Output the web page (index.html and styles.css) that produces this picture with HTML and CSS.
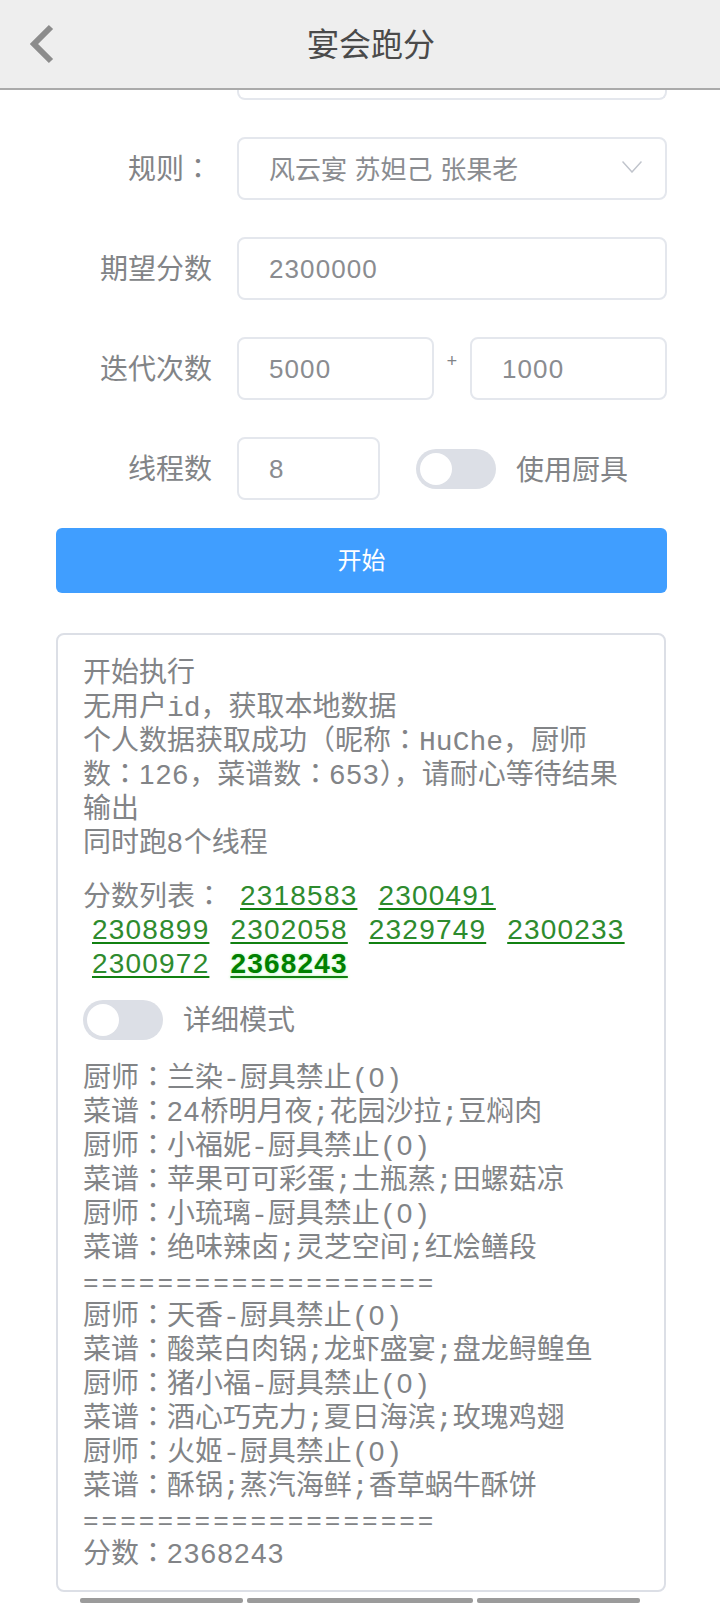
FILE: index.html
```html
<!DOCTYPE html>
<html>
<head>
<meta charset="utf-8">
<title>宴会跑分</title>
<link rel="stylesheet" href="styles.css">
</head>
<body>
<header class="topbar">
  <svg class="back" viewBox="0 0 24 40" width="24" height="40"><path d="M21 3 L4 20 L21 37" fill="none" stroke="#8c8c8c" stroke-width="6"/></svg>
  <h1 class="title">宴会跑分</h1>
</header>
<main class="form">
  <div class="cutoff"></div>
  <div class="row">
    <div class="label">规则<span class="c">：</span></div>
    <div class="field grow select">
      <span class="sel-text">风云宴 苏妲己 张果老</span>
      <svg class="caret" viewBox="0 0 20 12" width="20" height="12"><path d="M0.5 0.5 L10 11 L19.5 0.5" fill="none" stroke="#c0c4cc" stroke-width="1.5"/></svg>
    </div>
  </div>
  <div class="row">
    <div class="label">期望分数</div>
    <div class="field grow digits">2300000</div>
  </div>
  <div class="row">
    <div class="label">迭代次数</div>
    <div class="field grow digits">5000</div>
    <div class="times">+</div>
    <div class="field grow digits">1000</div>
  </div>
  <div class="row">
    <div class="label">线程数</div>
    <div class="field thread digits">8</div>
    <div class="switch switch-gap"><span class="knob"></span></div>
    <div class="switch-label">使用厨具</div>
  </div>
  <button class="start">开始</button>
  <section class="card">
    <div class="log">
      <div class="line">开始执行</div>
      <div class="line">无用户id，获取本地数据</div>
      <div class="line">个人数据获取成功（昵称<span class="c">：</span>HuChe，厨师</div>
      <div class="line">数<span class="c">：</span><span class="n">126</span>，菜谱数<span class="c">：</span><span class="n">653</span>），请耐心等待结果</div>
      <div class="line">输出</div>
      <div class="line">同时跑<span class="n">8</span>个线程</div>
    </div>
    <div class="scores"><span class="scores-label">分数列表<span class="c">：</span></span><a class="score">2318583</a><a class="score">2300491</a><a class="score">2308899</a><a class="score">2302058</a><a class="score">2329749</a><a class="score">2300233</a><a class="score">2300972</a><a class="score best">2368243</a></div>
    <div class="detail">
      <div class="switch"><span class="knob"></span></div>
      <div class="switch-label detail-label">详细模式</div>
    </div>
    <div class="log">
      <div class="line">厨师<span class="c">：</span>兰染-厨具禁止(<span class="n">0</span>)</div>
      <div class="line">菜谱<span class="c">：</span><span class="n">24</span>桥明月夜;花园沙拉;豆焖肉</div>
      <div class="line">厨师<span class="c">：</span>小福妮-厨具禁止(<span class="n">0</span>)</div>
      <div class="line">菜谱<span class="c">：</span>苹果可可彩蛋;土瓶蒸;田螺菇凉</div>
      <div class="line">厨师<span class="c">：</span>小琉璃-厨具禁止(<span class="n">0</span>)</div>
      <div class="line">菜谱<span class="c">：</span>绝味辣卤;灵芝空间;红烩鳝段</div>
      <div class="line sep">===================</div>
      <div class="line">厨师<span class="c">：</span>天香-厨具禁止(<span class="n">0</span>)</div>
      <div class="line">菜谱<span class="c">：</span>酸菜白肉锅;龙虾盛宴;盘龙鲟鳇鱼</div>
      <div class="line">厨师<span class="c">：</span>猪小福-厨具禁止(<span class="n">0</span>)</div>
      <div class="line">菜谱<span class="c">：</span>酒心巧克力;夏日海滨;玫瑰鸡翅</div>
      <div class="line">厨师<span class="c">：</span>火姬-厨具禁止(<span class="n">0</span>)</div>
      <div class="line">菜谱<span class="c">：</span>酥锅;蒸汽海鲜;香草蜗牛酥饼</div>
      <div class="line sep">===================</div>
      <div class="line">分数<span class="c">：</span><span class="n">2368243</span></div>
    </div>
  </section>
</main>
<div class="navhint"><span class="seg seg1"></span><span class="seg seg2"></span><span class="seg seg3"></span></div>
</body>
</html>
```
FILE: styles.css
```css
* { box-sizing: border-box; }
html, body { margin: 0; padding: 0; }
body {
  width: 720px;
  height: 1605px;
  overflow: hidden;
  background: #fff;
  color: #828487;
  font-family: "Liberation Mono", "Noto Sans CJK SC", monospace;
  font-size: 28px;
  line-height: 34px;
}
.topbar {
  display: flex;
  align-items: center;
  height: 90px;
  padding: 0 32px 0 30px;
  background: #eee;
  border-bottom: 2px solid #aaa;
}
.back { flex: none; }
.title {
  flex: 1;
  margin: 0;
  padding-top: 8px;
  text-align: center;
  font-size: 32px;
  font-weight: 400;
  color: #4a4a4a;
}
.form {
  width: 611px;
  margin-left: 56px;
}
.cutoff {
  margin-left: 181px;
  height: 10px;
  border: 2px solid #e4e7ed;
  border-top: none;
  border-radius: 0 0 8px 8px;
}
.row {
  display: flex;
  align-items: center;
  height: 63px;
  margin-top: 37px;
}
.label {
  flex: none;
  width: 156px;
  margin-right: 25px;
  padding-top: 6px;
  text-align: right;
}
.c { font-family: "Liberation Mono", "Noto Sans CJK TC", sans-serif; }
.n {
  font-family: "Liberation Sans", sans-serif;
  letter-spacing: 1.2px;
  line-height: 1px;
}
.field {
  display: flex;
  align-items: center;
  height: 63px;
  padding: 0 30px;
  border: 2px solid #e4e7ed;
  border-radius: 8px;
  font-size: 26px;
  color: #8a8c90;
}
.digits {
  font-family: "Liberation Sans", sans-serif;
  letter-spacing: 1.1px;
}
.grow { flex: 1 1 0; min-width: 0; }
.select { justify-content: space-between; padding-right: 23px; }
.sel-text { word-spacing: -8px; padding-top: 7px; }
.caret { flex: none; margin-top: -4px; }
.times {
  flex: none;
  width: 36px;
  margin-top: -14px;
  text-align: center;
  font-size: 18px;
}
.thread { flex: none; width: 143px; }
.switch {
  position: relative;
  flex: none;
  width: 80px;
  height: 40px;
  border-radius: 20px;
  background: #dcdfe6;
}
.switch-gap { margin-left: 36px; }
.knob {
  position: absolute;
  left: 4px;
  top: 4px;
  width: 32px;
  height: 32px;
  border-radius: 50%;
  background: #fff;
}
.switch-label { margin-left: 20px; padding-top: 8px; }
.detail-label { padding-top: 6px; }
.start {
  display: block;
  width: 100%;
  height: 65px;
  margin-top: 28px;
  padding: 4px 0 0;
  border: none;
  border-radius: 6px;
  background: #409eff;
  color: #fff;
  font: inherit;
  font-size: 24px;
}
.card {
  width: 610px;
  margin-top: 40px;
  padding: 18px 25px 22px;
  border: 2px solid #dcdfe6;
  border-radius: 8px;
}
.line { height: 34px; line-height: 44px; white-space: nowrap; }
.scores { margin-top: 20px; }
.scores-label {
  display: inline-block;
  height: 34px;
  line-height: 44px;
  margin-right: 8px;
  vertical-align: top;
}
.score {
  display: inline-block;
  height: 34px;
  line-height: 38px;
  margin: 0 12px 0 9px;
  font-family: "Liberation Sans", sans-serif;
  letter-spacing: 1.2px;
  color: #2e8b2e;
  vertical-align: top;
  text-decoration: underline;
  text-decoration-color: #118011;
  text-decoration-thickness: 2px;
  text-underline-offset: 3px;
}
.best {
  color: #008000;
  font-weight: 700;
  text-shadow: 0 0 3px #a5f5a5;
}
.detail {
  display: flex;
  align-items: center;
  height: 40px;
  margin: 21px 0 18px;
}
.sep { font-size: 26px; letter-spacing: 3px; }
.navhint {
  display: flex;
  gap: 4px;
  height: 5px;
  margin: 6px 0 0 80px;
}
.seg { height: 5px; border-radius: 2px; background: #9b9b9b; }
.seg1 { width: 163px; }
.seg2 { width: 226px; }
.seg3 { width: 163px; }
```
